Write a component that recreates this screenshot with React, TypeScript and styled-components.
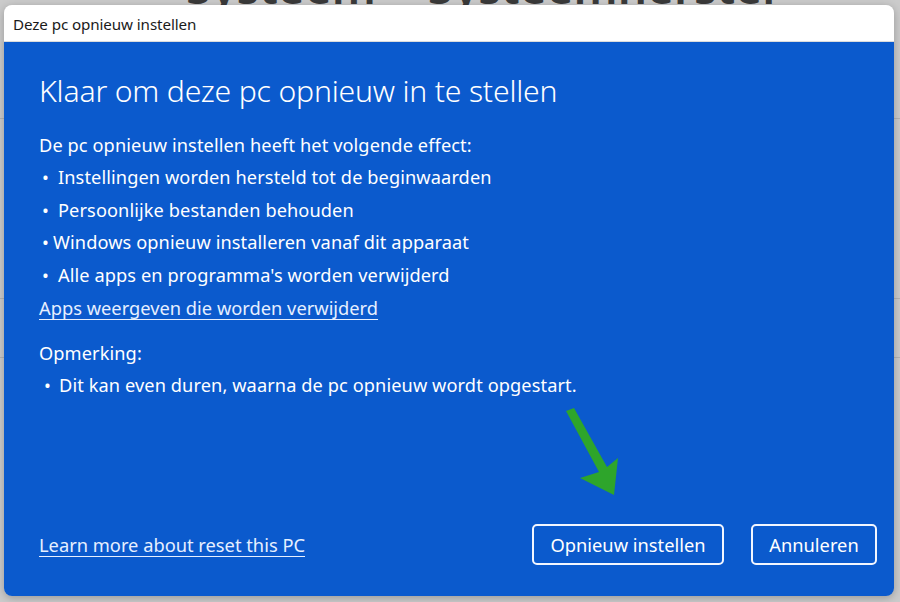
import React from 'react';
import styled, { createGlobalStyle } from 'styled-components';

const GlobalStyle = createGlobalStyle`
  html, body {
    margin: 0;
    padding: 0;
    width: 900px;
    height: 602px;
    overflow: hidden;
    background: #c9c9c9;
  }
  * { box-sizing: border-box; }
`;

const Page = styled.div`
  position: relative;
  width: 900px;
  height: 602px;
  overflow: hidden;
  background: #cbcbcb;
  font-family: "Noto Sans", "Open Sans", sans-serif;
`;

const Backdrop = styled.div`
  display: flex;
  flex-direction: column;
  height: 100%;
`;

const Crumbs = styled.div`
  display: flex;
  gap: 52px;
  margin-top: -38px;
  padding-left: 186px;
  font-size: 46px;
  font-weight: 600;
  color: #3a3a3a;
  line-height: 48px;
`;

const BackRow = styled.div<{ $top: number }>`
  margin-top: ${p => p.$top}px;
  border-top: 1px solid #b4b4b4;
  height: 1px;
`;

const Dialog = styled.div`
  position: absolute;
  left: 4px;
  top: 5px;
  width: 890px;
  height: 591px;
  border-radius: 8px;
  overflow: hidden;
  display: flex;
  flex-direction: column;
  box-shadow: 0 2px 8px rgba(0, 0, 0, 0.25);
`;

const TitleBar = styled.div`
  height: 37px;
  background: #ffffff;
  display: flex;
  align-items: center;
  padding: 2px 0 0 9px;
  font-size: 15.2px;
  letter-spacing: -0.1px;
  color: #1a1a1a;
  border-bottom: 1px solid #dcdcdc;
`;

const Body = styled.div`
  flex: 1;
  background: #0b5acd;
  color: #ffffff;
  display: flex;
  flex-direction: column;
  padding: 28px 17px 31px 35px;
`;

const Heading = styled.h1`
  margin: 0 0 17px;
  font-size: 30.2px;
  font-weight: 300;
  line-height: 42px;
  letter-spacing: -0.2px;
`;

const Text = styled.div<{ $indent?: number; $top?: number }>`
  font-size: 18.2px;
  line-height: 32.4px;
  padding-left: ${p => p.$indent ?? 0}px;
  margin-top: ${p => p.$top ?? 0}px;
  letter-spacing: 0.1px;
`;

const Bullet = styled.span<{ $gap: number }>`
  display: inline-block;
  width: ${p => p.$gap}px;
  padding-left: 3px;
`;

const Link = styled.a<{ $top?: number }>`
  display: inline-block;
  align-self: flex-start;
  margin-top: ${p => p.$top ?? 0}px;
  font-size: 18.3px;
  line-height: 32px;
  color: #e6efff;
  text-decoration: underline;
  text-underline-offset: 4px;
  text-decoration-thickness: 1px;
`;

const Spacer = styled.div`
  flex: 1;
`;

const Footer = styled.div`
  display: flex;
  align-items: center;
`;

const FooterLink = styled(Link)`
  align-self: center;
`;

const Buttons = styled.div`
  margin-left: auto;
  display: flex;
  gap: 27px;
`;

const Button = styled.button<{ $width: number }>`
  width: ${p => p.$width}px;
  height: 41px;
  border: 2px solid #f2f6ff;
  border-radius: 5px;
  background: transparent;
  color: #ffffff;
  font-family: "Noto Sans", "Open Sans", sans-serif;
  font-size: 18.3px;
  padding: 0;
`;

const Arrow = styled.svg`
  position: absolute;
  left: 560px;
  top: 405px;
`;

const effects = [
  { text: 'Instellingen worden hersteld tot de beginwaarden', gap: 19 },
  { text: 'Persoonlijke bestanden behouden', gap: 19 },
  { text: 'Windows opnieuw installeren vanaf dit apparaat', gap: 14 },
  { text: "Alle apps en programma's worden verwijderd", gap: 19 },
];

export default function App() {
  return (
    <Page>
      <GlobalStyle />
      <Backdrop>
        <Crumbs>
          <span>Systeem</span>
          <span>Systeemherstel</span>
        </Crumbs>
        <BackRow $top={108} />
        <BackRow $top={179} />
        <BackRow $top={58} />
      </Backdrop>
      <Dialog>
        <TitleBar>Deze pc opnieuw instellen</TitleBar>
        <Body>
          <Heading>Klaar om deze pc opnieuw in te stellen</Heading>
          <Text>De pc opnieuw instellen heeft het volgende effect:</Text>
          {effects.map(e => (
            <Text key={e.text}>
              <Bullet $gap={e.gap}>•</Bullet>
              {e.text}
            </Text>
          ))}
          <Link href="#" $top={1}>Apps weergeven die worden verwijderd</Link>
          <Text $top={13}>Opmerking:</Text>
          <Text $indent={2}>
            <Bullet $gap={18}>•</Bullet>
            Dit kan even duren, waarna de pc opnieuw wordt opgestart.
          </Text>
          <Spacer />
          <Footer>
            <FooterLink href="#">Learn more about reset this PC</FooterLink>
            <Buttons>
              <Button $width={192}>Opnieuw instellen</Button>
              <Button $width={126}>Annuleren</Button>
            </Buttons>
          </Footer>
        </Body>
      </Dialog>
      <Arrow width="70" height="100" viewBox="0 0 70 100">
        <path d="M6 6 L14 3 L47 62 L58 53 L54 90 L20 73 L39 67 Z" fill="#2ea52b" />
      </Arrow>
    </Page>
  );
}
